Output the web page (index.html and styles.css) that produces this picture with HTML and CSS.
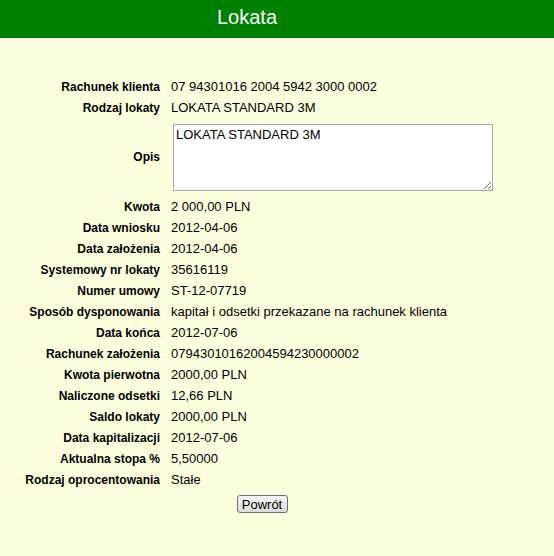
FILE: index.html
```html
<!DOCTYPE html>
<html lang="pl">
<head>
<meta charset="utf-8">
<title>Lokata</title>
<link rel="stylesheet" href="styles.css">
</head>
<body>
<div class="header"><div class="header-title">Lokata</div></div>
<div class="content">
  <div class="row first"><div class="label">Rachunek klienta</div><div class="value">07 94301016 2004 5942 3000 0002</div></div>
  <div class="row"><div class="label">Rodzaj lokaty</div><div class="value">LOKATA STANDARD 3M</div></div>
  <div class="row area-row"><div class="label">Opis</div><div class="value"><textarea class="desc" readonly>LOKATA STANDARD 3M</textarea></div></div>
  <div class="row"><div class="label">Kwota</div><div class="value">2 000,00 PLN</div></div>
  <div class="row"><div class="label">Data wniosku</div><div class="value">2012-04-06</div></div>
  <div class="row"><div class="label">Data założenia</div><div class="value">2012-04-06</div></div>
  <div class="row"><div class="label">Systemowy nr lokaty</div><div class="value">35616119</div></div>
  <div class="row"><div class="label">Numer umowy</div><div class="value">ST-12-07719</div></div>
  <div class="row"><div class="label">Sposób dysponowania</div><div class="value">kapitał i odsetki przekazane na rachunek klienta</div></div>
  <div class="row"><div class="label">Data końca</div><div class="value">2012-07-06</div></div>
  <div class="row"><div class="label">Rachunek założenia</div><div class="value">07943010162004594230000002</div></div>
  <div class="row"><div class="label">Kwota pierwotna</div><div class="value">2000,00 PLN</div></div>
  <div class="row"><div class="label">Naliczone odsetki</div><div class="value">12,66 PLN</div></div>
  <div class="row"><div class="label">Saldo lokaty</div><div class="value">2000,00 PLN</div></div>
  <div class="row"><div class="label">Data kapitalizacji</div><div class="value">2012-07-06</div></div>
  <div class="row"><div class="label">Aktualna stopa %</div><div class="value">5,50000</div></div>
  <div class="row"><div class="label">Rodzaj oprocentowania</div><div class="value">Stałe</div></div>
  <div class="actions"><button class="btn" type="button">Powrót</button></div>
</div>
</body>
</html>
```
FILE: styles.css
```css
html, body {
  margin: 0;
  padding: 0;
  background: #ffffe0;
  font-family: "Liberation Sans", Arial, sans-serif;
  color: #000;
}
.header {
  background: #008000;
  height: 38px;
}
.header-title {
  width: 494px;
  text-align: center;
  color: #fff;
  font-size: 20px;
  line-height: 34px;
}
.content {
  width: 484px;
  margin: 39px 0 0 20px;
}
.row {
  display: flex;
  align-items: baseline;
  height: 21px;
  line-height: 21px;
}
.row.first {
  height: 20px;
  line-height: 20px;
}
.label {
  width: 140px;
  flex: none;
  text-align: right;
  font-weight: bold;
  font-size: 12px;
  white-space: nowrap;
}
.value {
  margin-left: 11px;
  font-size: 13px;
  white-space: nowrap;
}
.row.area-row {
  align-items: center;
  height: 78px;
}
.desc {
  display: block;
  box-sizing: border-box;
  width: 320px;
  height: 67px;
  margin: 1px 0 0 2px;
  padding: 2px;
  border: 1px solid #a9a9a9;
  background: #fff;
  font-family: "Liberation Sans", Arial, sans-serif;
  font-size: 13px;
  line-height: 15px;
  color: #000;
}
.actions {
  display: flex;
  justify-content: center;
  padding-top: 5px;
}
.btn {
  box-sizing: border-box;
  width: 51px;
  height: 18px;
  padding: 0;
  margin: 0;
  border: 1px solid #707070;
  border-radius: 3px;
  background: linear-gradient(#f7f7f7, #dcdcdc);
  font-family: "Liberation Sans", Arial, sans-serif;
  font-size: 13px;
  line-height: 15px;
  color: #000;
}
```
